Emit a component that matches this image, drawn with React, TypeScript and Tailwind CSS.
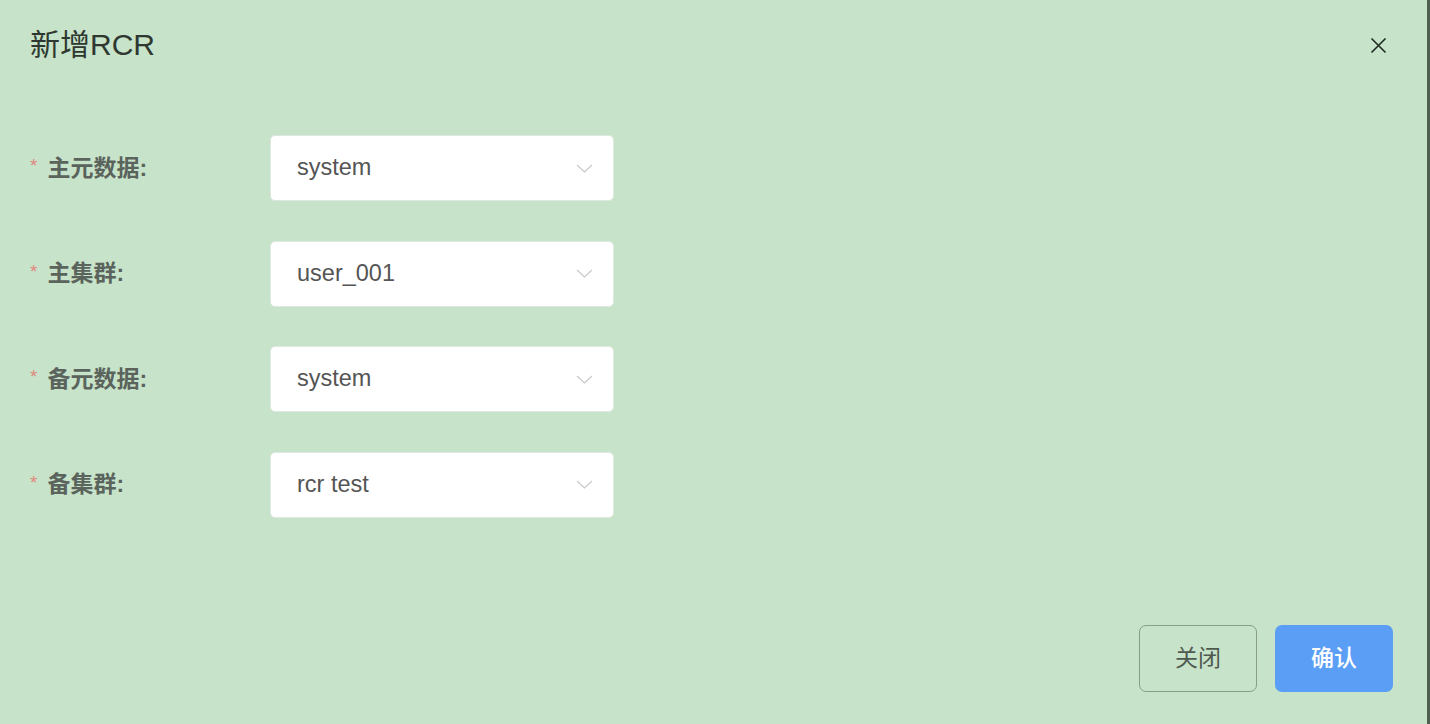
import React from 'react';

type Field = { label: string; value: string };

const fields: Field[] = [
  { label: '主元数据', value: 'system' },
  { label: '主集群', value: 'user_001' },
  { label: '备元数据', value: 'system' },
  { label: '备集群', value: 'rcr test' },
];

const font = { fontFamily: '"Helvetica Neue", "Liberation Sans", "Noto Sans CJK SC", sans-serif' };

const Chevron = () => (
  <svg width="17" height="9" viewBox="0 0 17 9" fill="none">
    <path d="M1 1l7.5 7 7.5-7" stroke="#c9c9c9" strokeWidth="1.2" />
  </svg>
);

const App: React.FC = () => {
  return (
    <div className="w-[1430px] h-[724px] bg-[#c7e3c9] flex overflow-hidden" style={font}>
      <div className="flex-1 flex flex-col">
        {/* header */}
        <div className="flex items-center justify-between pl-[30px] pr-[40px] pt-[24px] h-[66px]">
          <h2 className="text-[30px] leading-none text-[#2e3830]">新增RCR</h2>
          <svg width="17" height="17" viewBox="0 0 17 17">
            <path d="M1.5 1.5l14 14M15.5 1.5l-14 14" stroke="#1f2a22" strokeWidth="1.6" />
          </svg>
        </div>

        {/* form */}
        <div className="flex flex-col gap-[39.5px] pl-[30px] pt-[69px]">
          {fields.map((f) => (
            <div key={f.label} className="flex items-center h-[66px]">
              <div className="w-[240px] flex items-center text-[23px] font-bold text-[#5a635c]">
                <span className="text-[#e08a80] text-[19px] mr-[10px] mt-[-3px] font-normal">*</span>
                {f.label}:
              </div>
              <div className="w-[344px] h-[66px] bg-white rounded-[5px] border border-[#dfe8e0] flex items-center justify-between pl-[26px] pr-[20px]">
                <span className="text-[23.5px] text-[#555]">{f.value}</span>
                <Chevron />
              </div>
            </div>
          ))}
        </div>

        {/* footer */}
        <div className="mt-auto flex justify-end gap-[18px] pr-[34px] pb-[32px]">
          <button className="w-[118px] h-[67px] rounded-[7px] border-[1.5px] border-[#899d8b] text-[23px] text-[#4e5a50]">
            关闭
          </button>
          <button className="w-[118px] h-[67px] rounded-[7px] bg-[#5b9ef6] text-[23px] font-medium text-white">
            确认
          </button>
        </div>
      </div>
      <div className="w-[3px] bg-[#4f5f52]" />
    </div>
  );
};

export default App;
